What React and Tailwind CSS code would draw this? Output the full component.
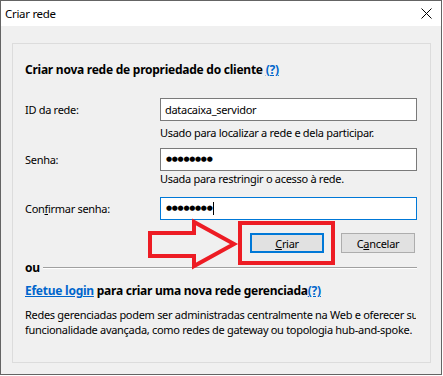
import React from "react";

function Dots() {
  return (
    <span className="font-['DejaVu_Sans',sans-serif] text-[7px] leading-none">●●●●●●●●</span>
  );
}

export default function App() {
  return (
    <div className="relative w-[443px] h-[376px] bg-white text-black text-[11px] tracking-[-0.3px] font-['Noto_Sans',sans-serif]">
      <div className="w-[442px] h-[375px] border border-[#646464] flex flex-col">
        <div className="h-[25px] bg-white flex items-center justify-between pl-[4px] pr-[9px] shrink-0">
          <span className="text-[11.5px] leading-none">Criar rede</span>
          <svg width="11" height="11" viewBox="0 0 11 11">
            <path d="M0.5 0.5 L10.5 10.5 M10.5 0.5 L0.5 10.5" stroke="#000" strokeWidth="1" fill="none" />
          </svg>
        </div>
        <div className="flex-1 bg-[#f0f0f0] pt-[17px] pl-[11px]">
          <div className="w-[419px] h-[320px] border border-[#dcdcdc] pl-[12px] flex flex-col">
            <div className="mt-[18px] h-[16px] leading-[16px] font-bold text-[12px] tracking-[-0.25px]">
              Criar nova rede de propriedade do cliente{" "}
              <span className="text-[#0066cc] underline">(?)</span>
            </div>

            <div className="mt-[20px] flex items-center">
              <span className="w-[135px] leading-[16px]">ID da rede:</span>
              <div className="w-[257px] h-[23px] border border-[#7a7a7a] bg-white flex items-center pl-[4px] leading-none">
                datacaixa_servidor
              </div>
            </div>
            <div className="mt-[4px] ml-[135px] leading-[15px]">Usado para localizar a rede e dela participar.</div>

            <div className="mt-[8px] flex items-center">
              <span className="w-[135px] leading-[16px]">Senha:</span>
              <div className="w-[257px] h-[23px] border border-[#7a7a7a] bg-white flex items-center pl-[5px]">
                <Dots />
              </div>
            </div>
            <div className="ml-[135px] leading-[15px]">Usada para restringir o acesso à rede.</div>

            <div className="mt-[11px] flex items-center">
              <span className="w-[135px] leading-[16px]">
                Con<span className="underline">f</span>irmar senha:
              </span>
              <div className="w-[257px] h-[23px] border border-[#0078d7] bg-white flex items-center pl-[5px]">
                <Dots />
                <span className="ml-[1px] w-[1px] h-[13px] bg-black" />
              </div>
            </div>

            <div className="mt-[13px] flex pl-[225px] gap-[17px]">
              <div className="w-[74px] h-[20px] border-2 border-[#0078d7] bg-[#e1e1e1] flex items-center justify-center leading-none">
                <span><span className="underline">C</span>riar</span>
              </div>
              <div className="w-[74px] h-[20px] border border-[#adadad] bg-[#e1e1e1] flex items-center justify-center leading-none">
                <span>C<span className="underline">a</span>ncelar</span>
              </div>
            </div>

            <div className="mt-[7px] flex items-center h-[16px]">
              <span className="font-bold text-[12px] leading-[16px]">ou</span>
              <div className="ml-[3px] w-[374px] h-[2px] border-t border-[#a0a0a0] border-b border-b-white" />
            </div>

            <div className="mt-[7px] h-[16px] leading-[16px] font-bold text-[12px] tracking-[-0.25px] whitespace-nowrap">
              <span className="text-[#0066cc] underline">Efetue login</span> para criar uma nova rede gerenciada
              <span className="text-[#0066cc] underline">(?)</span>
            </div>

            <div className="mt-[8px] w-[391px] overflow-hidden whitespace-nowrap leading-[15px]">
              <div>Redes gerenciadas podem ser administradas centralmente na Web e oferecer suporte a</div>
              <div>funcionalidade avançada, como redes de gateway ou topologia hub-and-spoke.</div>
            </div>
          </div>
        </div>
      </div>

      <svg className="absolute left-0 top-0 pointer-events-none" width="443" height="376">
        <polygon
          points="150,233 194,233 194,222 234,244 194,266 194,256 150,256"
          fill="none"
          stroke="#ed1c24"
          strokeWidth="4"
          strokeLinejoin="miter"
        />
      </svg>
      <div className="absolute left-[238px] top-[221px] w-[97px] h-[44px] border-4 border-[#ed1c24]" />
    </div>
  );
}
